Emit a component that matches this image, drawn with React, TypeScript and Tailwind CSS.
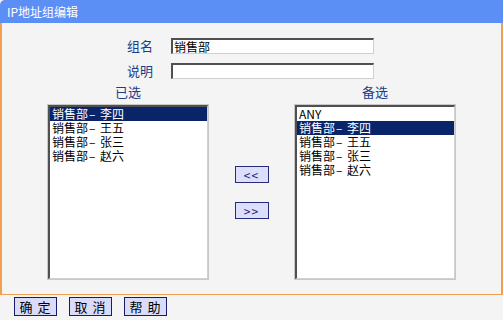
import React from "react";

const font = { fontFamily: '"SimSun","Noto Sans CJK SC","Liberation Sans",sans-serif' };

const leftItems: [string, string][] = [["销售部", "李四"], ["销售部", "王五"], ["销售部", "张三"], ["销售部", "赵六"]];
const rightItems: [string, string][] = [["ANY", ""], ["销售部", "李四"], ["销售部", "王五"], ["销售部", "张三"], ["销售部", "赵六"]];

function ListBox({ items, selected }: { items: [string, string][]; selected: number }) {
  return (
    <div className="w-[160px] h-[174px] border-t-2 border-l-2 border-t-[#505050] border-l-[#505050] border-r border-b border-r-[#d0d0d0] border-b-[#d0d0d0] bg-white outline outline-1 outline-[#c8c8c8]">
      {items.map(([a, b], i) => (
        <div
          key={i}
          className={`h-[14px] leading-[14px] text-[12px] pl-[2px] whitespace-nowrap flex items-center ${
            i === selected ? "bg-[#0a246a] text-white" : "text-black"
          }`}
        >
          <span className="leading-[14px]">{a}</span>
          {b && <span className="inline-block w-[12px] pl-[1px] leading-[14px]">–</span>}
          {b && <span className="leading-[14px]">{b}</span>}
        </div>
      ))}
    </div>
  );
}

function SmallBtn({ label }: { label: string }) {
  return (
    <div className="w-[34px] h-[17px] border border-[#2a2a7a] bg-[#dcdffb] text-[12px] leading-[15px] text-center text-[#1a1a6a] tracking-[1px]">
      {label}
    </div>
  );
}

function FootBtn({ label }: { label: string }) {
  return (
    <div className="w-[43px] h-[19px] border border-[#1a1a6a] bg-[#d8dcfa] text-[13px] leading-[17px] text-center text-black tracking-[5px] pl-[4px]">
      {label}
    </div>
  );
}

export default function App() {
  return (
    <div className="w-[503px] h-[320px] bg-[#f4f4f4] overflow-hidden" style={font}>
      <div className="h-[23px] bg-[#5c8ff6] rounded-tl-[5px] text-white text-[12px] leading-[23px] pl-[7px]">
        IP地址组编辑
      </div>
      <div className="h-[271px] border-l-2 border-r-2 border-[#f0a050] flex flex-col">
        <div className="flex items-center mt-[15px]">
          <div className="w-[151px] text-right text-[13px] leading-[16px] text-[#1c3c88]">组名</div>
          <div className="ml-[18px] w-[203px] h-[16px] bg-white border-t-2 border-l-2 border-t-[#505050] border-l-[#505050] border-r border-b border-r-[#d0d0d0] border-b-[#d0d0d0] text-[12px] leading-[13px] pl-[1px]">
            销售部
          </div>
        </div>
        <div className="flex items-center mt-[9px]">
          <div className="w-[151px] text-right text-[13px] leading-[16px] text-[#1c3c88]">说明</div>
          <div className="ml-[18px] w-[203px] h-[16px] bg-white border-t-2 border-l-2 border-t-[#505050] border-l-[#505050] border-r border-b border-r-[#d0d0d0] border-b-[#d0d0d0]" />
        </div>
        <div className="flex mt-[6px]">
          <div className="ml-[46px] w-[160px] flex flex-col items-center">
            <div className="text-[13px] leading-[14px] text-[#1c3c88]">已选</div>
            <div className="mt-[6px]">
              <ListBox items={leftItems} selected={0} />
            </div>
          </div>
          <div className="w-[87px] flex flex-col items-center pt-[81px] gap-[19px]">
            <SmallBtn label="<<" />
            <SmallBtn label=">>" />
          </div>
          <div className="w-[160px] flex flex-col items-center">
            <div className="text-[13px] leading-[14px] text-[#1c3c88]">备选</div>
            <div className="mt-[6px]">
              <ListBox items={rightItems} selected={1} />
            </div>
          </div>
        </div>
      </div>
      <div className="h-[26px] border-t border-[#f0a050] flex items-start pt-[2px] pl-[14px] gap-[12px]">
        <FootBtn label="确定" />
        <FootBtn label="取消" />
        <FootBtn label="帮助" />
      </div>
    </div>
  );
}
